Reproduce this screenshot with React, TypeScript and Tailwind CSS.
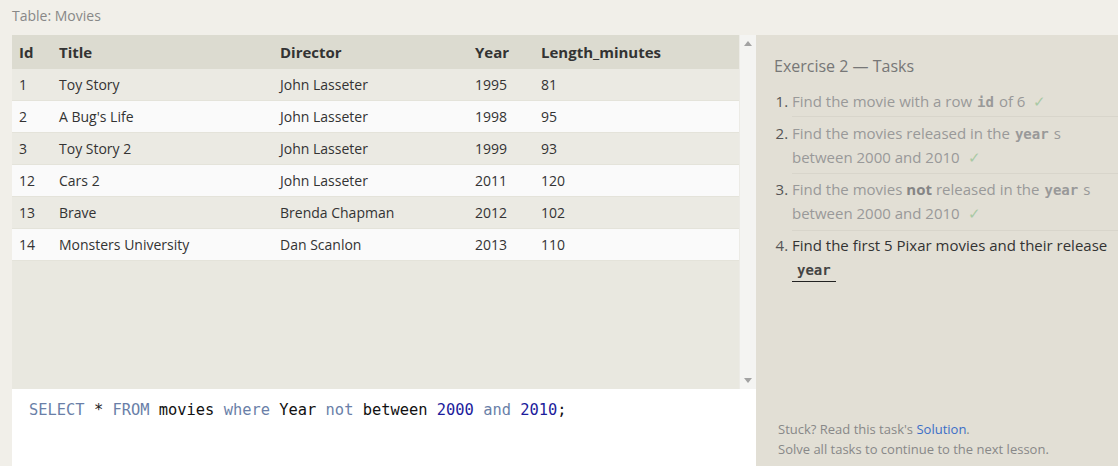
import React from "react";

type Movie = {
  id: number;
  title: string;
  director: string;
  year: number;
  length: number;
};

const movies: Movie[] = [
  { id: 1, title: "Toy Story", director: "John Lasseter", year: 1995, length: 81 },
  { id: 2, title: "A Bug's Life", director: "John Lasseter", year: 1998, length: 95 },
  { id: 3, title: "Toy Story 2", director: "John Lasseter", year: 1999, length: 93 },
  { id: 12, title: "Cars 2", director: "John Lasseter", year: 2011, length: 120 },
  { id: 13, title: "Brave", director: "Brenda Chapman", year: 2012, length: 102 },
  { id: 14, title: "Monsters University", director: "Dan Scanlon", year: 2013, length: 110 },
];

const Check = () => <span className="ml-2 text-[#a9c9a4]">✓</span>;

const Code = ({ children, dark }: { children: React.ReactNode; dark?: boolean }) => (
  <code
    className={`mx-[5px] font-bold text-[14px] font-['DejaVu_Sans_Mono',monospace] ${
      dark ? "text-[#444]" : "text-[#999]"
    }`}
  >
    {children}
  </code>
);

const App: React.FC = () => {
  return (
    <div className="h-[466px] w-[1118px] overflow-hidden bg-[#f1efe9] flex flex-col font-['Open_Sans',sans-serif]">
      <div className="h-[35px] pl-3 pt-[5px] text-[14px] leading-[22px] text-[#888]">Table: Movies</div>

      <div className="flex flex-1 pl-3 min-h-0">
        <div className="w-[744px] flex flex-col">
          <div className="h-[354px] flex">
            <div className="w-[727px] bg-[#e9e8e0] flex flex-col">
              <div className="h-[34px] flex items-center bg-[#dcdbd0] text-[15px] font-bold text-[#333]">
                <div className="w-[40px] pl-[7px]">Id</div>
                <div className="w-[221px] pl-[7px]">Title</div>
                <div className="w-[195px] pl-[7px]">Director</div>
                <div className="w-[66px] pl-[7px]">Year</div>
                <div className="flex-1 pl-[7px]">Length_minutes</div>
              </div>
              {movies.map((m, i) => (
                <div
                  key={m.id}
                  className={`h-[32px] flex items-center text-[14px] text-[#333] border-b border-[#e4e3da] ${
                    i % 2 === 0 ? "bg-[#ebeae3]" : "bg-[#fafafa]"
                  }`}
                >
                  <div className="w-[40px] pl-[7px]">{m.id}</div>
                  <div className="w-[221px] pl-[7px]">{m.title}</div>
                  <div className="w-[195px] pl-[7px]">{m.director}</div>
                  <div className="w-[66px] pl-[7px]">{m.year}</div>
                  <div className="flex-1 pl-[7px]">{m.length}</div>
                </div>
              ))}
            </div>
            <div className="w-[17px] bg-[#f4f4f2] flex flex-col items-center justify-between py-[6px] border-l border-[#ecebe6]">
              <svg width="8" height="5" viewBox="0 0 8 5">
                <path d="M0 5 L4 0 L8 5 Z" fill="#a3a3a3" />
              </svg>
              <svg width="8" height="5" viewBox="0 0 8 5">
                <path d="M0 0 L4 5 L8 0 Z" fill="#a3a3a3" />
              </svg>
            </div>
          </div>
          <div className="flex-1 bg-white pl-[17px] pt-[11px] text-[15.4px] leading-[20px] font-['DejaVu_Sans_Mono',monospace] whitespace-pre">
            <span className="text-[#6a7fa8]">SELECT</span>
            <span className="text-[#222]"> * </span>
            <span className="text-[#6a7fa8]">FROM</span>
            <span className="text-[#111]"> movies </span>
            <span className="text-[#6a7fa8]">where</span>
            <span className="text-[#111]"> Year </span>
            <span className="text-[#6a7fa8]">not</span>
            <span className="text-[#111]"> between </span>
            <span className="text-[#1c1c9c]">2000</span>
            <span className="text-[#6a7fa8]"> and </span>
            <span className="text-[#1c1c9c]">2010</span>
            <span className="text-[#111]">;</span>
          </div>
        </div>

        <div className="flex-1 bg-[#e2dfd5] flex flex-col">
          <div className="pl-[18px] pt-[19px] text-[16px] leading-[24px] text-[#777]">Exercise 2 — Tasks</div>
          <ol className="list-decimal pl-[36px] mt-[7px] text-[15px] leading-[24px] marker:text-[#555]">
            <li className="pt-1 pb-[3px] text-[#999]">
              <div className="h-[24px]">
                Find the movie with a row<Code>id</Code>of 6<Check />
              </div>
            </li>
            <li className="py-1 text-[#999] border-t border-[#d8d5cb]">
              <div className="h-[24px]">
                Find the movies released in the<Code>year</Code>s
              </div>
              <div className="h-[24px]">
                between 2000 and 2010<Check />
              </div>
            </li>
            <li className="pt-[3px] pb-[5px] text-[#999] border-t border-[#d8d5cb]">
              <div className="h-[24px]">
                Find the movies <b className="text-[#858585]">not</b> released in the<Code>year</Code>s
              </div>
              <div className="h-[24px]">
                between 2000 and 2010<Check />
              </div>
            </li>
            <li className="pt-[2px] text-[#333] border-t border-[#d8d5cb]">
              <div className="h-[24px]">Find the first 5 Pixar movies and their release</div>
              <div className="h-[24px]">
                <span className="inline-block border-b border-[#222] leading-[18px] pb-[2px] w-[44px]">
                  <Code dark>year</Code>
                </span>
              </div>
            </li>
          </ol>
          <div className="mt-auto pl-[22px] pb-[7px] text-[13px] leading-[20px] text-[#888]">
            <div>
              Stuck? Read this task's <span className="text-[#3b6ec7]">Solution</span>.
            </div>
            <div>Solve all tasks to continue to the next lesson.</div>
          </div>
        </div>
      </div>
    </div>
  );
};

export default App;
